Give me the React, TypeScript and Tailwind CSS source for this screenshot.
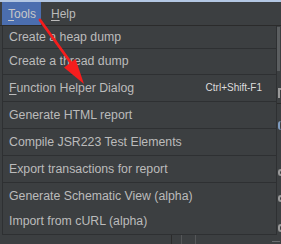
import React from "react";

const items: { label: React.ReactNode; shortcut?: string; h: string; sep: boolean }[] = [
  { label: "Create a heap dump", h: "h-[22px]", sep: false },
  { label: "Create a thread dump", h: "h-[25px]", sep: true },
  {
    label: (
      <>
        <span className="underline underline-offset-2">F</span>unction Helper Dialog
      </>
    ),
    shortcut: "Ctrl+Shift-F1",
    h: "h-[26px]",
    sep: true,
  },
  { label: "Generate HTML report", h: "h-[26px]", sep: true },
  { label: "Compile JSR223 Test Elements", h: "h-[26px]", sep: true },
  { label: "Export transactions for report", h: "h-[26px]", sep: true },
  { label: "Generate Schematic View (alpha)", h: "h-[26px]", sep: true },
  { label: "Import from cURL (alpha)", h: "h-[25px]", sep: false },
];

export default function App() {
  return (
    <div
      className="relative w-[281px] h-[244px] overflow-hidden bg-[#3c3f41] text-[#bbbbbb]"
      style={{ fontFamily: '"Liberation Sans", Arial, sans-serif' }}
    >
      {/* top highlight line */}
      <div className="h-[2px] bg-[#b3c7e3]" />
      {/* menubar */}
      <div className="flex h-[23px] items-stretch text-[12px] leading-none">
        <div className="ml-[2px] flex w-[39px] items-center bg-[#4b6eaf] pl-[6px] text-[#c8c8c8]">
          <span>
            <span className="underline underline-offset-2">T</span>ools
          </span>
        </div>
        <div className="flex items-center pl-[10px]">
          <span>
            <span className="underline underline-offset-2">H</span>elp
          </span>
        </div>
      </div>
      <div className="h-px bg-[#2b2b2b]" />
      {/* body */}
      <div className="flex">
        <div className="ml-[2px] w-[275px] border-x border-b border-[#2e3032] bg-[#3c3f41] text-[12.3px] leading-none">
          {items.map((it, i) => (
            <div key={i}>
              {it.sep && <div className="h-px bg-[#2e3032]" />}
              <div className={`flex items-center justify-between pl-[6px] pr-[14px] ${it.h}`}>
                <span className="whitespace-nowrap">{it.label}</span>
                {it.shortcut && (
                  <span className="whitespace-nowrap text-[10px] text-[#dcdcdc]">{it.shortcut}</span>
                )}
              </div>
            </div>
          ))}
        </div>
        {/* underlying window sliver */}
        <div className="flex w-[4px] flex-col overflow-hidden">
          <div className="mt-[1px] h-[44px] w-[3px] bg-[#5b5e60]" />
          <div className="ml-[1px] mt-[17px] h-[10px] w-[3px] border-l-2 border-t-2 border-[#9a9a9a]" />
          <div className="mt-[5px] h-px bg-[#2b2b2b]" />
          <div className="ml-[1px] mt-[17px] h-[9px] w-[3px] rounded-l-sm border-l-2 border-[#7f9cc0]" />
          <div className="ml-[1px] mt-[39px] h-[7px] w-[3px] rounded-l-full border-2 border-r-0 border-[#9a9a9a]" />
          <div className="ml-[1px] mt-[19px] h-[7px] w-[3px] rounded-l-full border-2 border-r-0 border-[#9a9a9a]" />
          <div className="ml-[1px] mt-[22px] h-[8px] w-[3px] rounded-l-full border-2 border-r-0 border-[#9a9a9a]" />
        </div>
      </div>
      {/* bottom strip */}
      <div className="flex h-[10px]">
        <div className="ml-[171px] h-full w-px bg-[#2b2b2b]" />
        <div className="ml-[9px] h-full w-px bg-[#555759]" />
        <div className="ml-[13px] h-full w-px bg-[#555759]" />
        <div className="ml-[76px] mt-[6px] h-px w-[8px] bg-[#6a6d70]" />
      </div>
      {/* red annotation arrow */}
      <svg className="pointer-events-none absolute left-0 top-0" width="281" height="244" viewBox="0 0 281 244">
        <line x1="40" y1="20" x2="71" y2="63" stroke="#f51d1d" strokeWidth="2.8" strokeLinecap="round" />
        <polygon points="84,84 64,67.5 75.5,59" fill="#f51d1d" />
      </svg>
    </div>
  );
}
